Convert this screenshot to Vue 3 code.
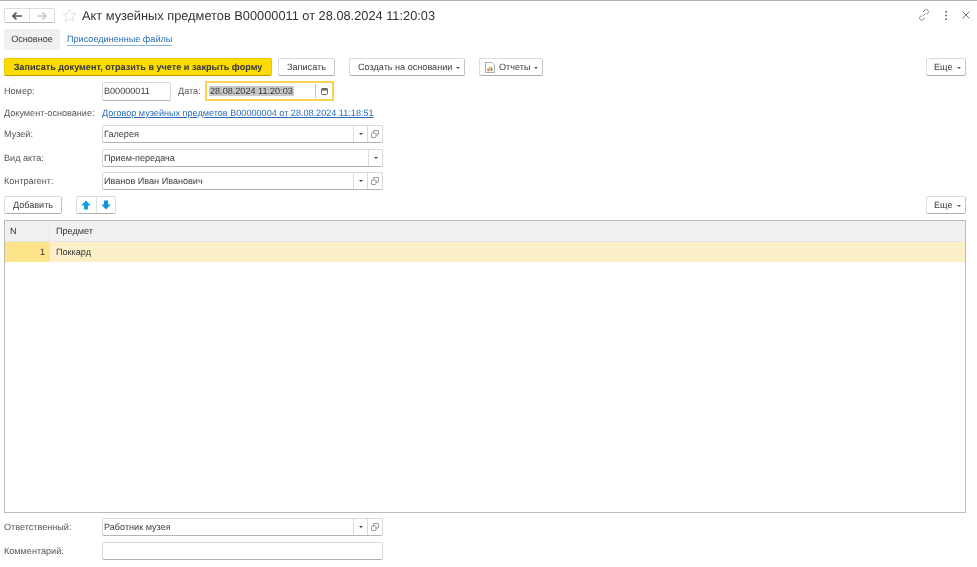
<script setup>
const fields = [
  { label: 'Музей:', value: 'Галерея', open: true },
  { label: 'Вид акта:', value: 'Прием-передача', open: false },
  { label: 'Контрагент:', value: 'Иванов Иван Иванович', open: true }
]
</script>

<template>
  <div class="page">
    <header class="head">
      <div class="nav">
        <button class="nav-btn"><svg width="10" height="8" viewBox="0 0 10 8"><path d="M4.500.5 1 4l3.500 3.500M1.500 4H10" fill="none" stroke="#555" stroke-width="1.700"/></svg></button>
        <button class="nav-btn"><svg width="10" height="8" viewBox="0 0 10 8"><path d="M5.500.5 9 4 5.500 7.500M8.500 4H0" fill="none" stroke="#ccc" stroke-width="1.700"/></svg></button>
      </div>
      <svg class="star" width="15" height="15" viewBox="0 0 15 15"><path d="M7.500 1l1.900 4.400 4.600.4-3.500 3.100 1.100 4.700-4.100-2.500-4.100 2.500 1.100-4.700L1 5.800l4.600-.4z" fill="#fff" stroke="#e2e2e2"/></svg>
      <h1 class="title">Акт музейных предметов В00000011 от 28.08.2024 11:20:03</h1>
      <div class="win-icons">
        <svg width="12" height="12" viewBox="0 0 12 12" fill="none" stroke="#8a8a8a" stroke-width="1"><path d="M5 3l1.800-1.800a2.100 2.100 0 0 1 3 0v0a2.100 2.100 0 0 1 0 3L8.500 5.700M7 9l-1.800 1.500a2.100 2.100 0 0 1-3 0v0a2.100 2.100 0 0 1 0-3L3.500 6.300M4.500 7.500l3-3"/></svg>
        <svg width="2" height="9" viewBox="0 0 2 9" fill="#777"><rect width="2" height="1.600"/><rect y="3.700" width="2" height="1.600"/><rect y="7.400" width="2" height="1.600"/></svg>
        <svg width="8" height="8" viewBox="0 0 8 8" stroke="#777" stroke-width="1"><path d="M.5.5l7 7M7.500.5l-7 7"/></svg>
      </div>
    </header>

    <nav class="tabs">
      <span class="tab">Основное</span>
      <a class="tab-link">Присоединенные файлы</a>
    </nav>

    <div class="toolbar">
      <button class="btn primary">Записать документ, отразить в учете и закрыть форму</button>
      <button class="btn save">Записать</button>
      <button class="btn create">Создать на основании<i class="caret"></i></button>
      <button class="btn reports">
        <svg class="rep-icon" width="10" height="11" viewBox="0 0 10 11"><path d="M.5.500h6.500L9.500 3v7.500H.5z" fill="#fff" stroke="#aaa"/><rect x="2.500" y="6.500" width="1.200" height="2.500" fill="#c33"/><rect x="4.300" y="4.500" width="1.200" height="4.500" fill="#d9a520"/><rect x="6.100" y="5.500" width="1.200" height="3.500" fill="#3a9a3a"/></svg>
        <span>Отчеты</span><i class="caret"></i>
      </button>
      <button class="btn more">Еще<i class="caret"></i></button>
    </div>

    <div class="row number-row">
      <label class="lbl">Номер:</label>
      <div class="input num">В00000011</div>
      <label class="date-lbl">Дата:</label>
      <div class="date">
        <span class="date-text"><span class="sel">28.08.2024 11:20:03</span></span>
        <span class="date-btn"><svg width="7" height="7" viewBox="0 0 7 7"><rect x=".5" y=".5" width="6" height="6" rx="1" fill="#fff" stroke="#666"/><rect x=".5" y=".5" width="6" height="2" fill="#666"/></svg></span>
      </div>
    </div>

    <div class="row base-row">
      <label class="lbl">Документ-основание:</label>
      <a class="link">Договор музейных предметов В00000004 от 28.08.2024 11:18:51</a>
    </div>

    <div v-for="f in fields" :key="f.label" class="row field-row">
      <label class="lbl">{{ f.label }}</label>
      <div class="input wide">
        <span class="val">{{ f.value }}</span>
        <span class="cell"><i class="caret dark"></i></span>
        <span v-if="f.open" class="cell"><svg width="8" height="8" viewBox="0 0 8 8" fill="#fff" stroke="#999"><rect x="2.500" y=".5" width="5" height="4.500" rx=".5"/><rect x=".5" y="3" width="4.500" height="4.500" rx=".5"/></svg></span>
      </div>
    </div>

    <div class="table-bar">
      <button class="btn add">Добавить</button>
      <div class="arrows">
        <button class="arrow"><svg width="10" height="10" viewBox="0 0 10 10"><path d="M5 .5 9.800 5.500H7V9.500H3V5.500H.2z" fill="#12a0dc"/></svg></button>
        <button class="arrow"><svg width="10" height="10" viewBox="0 0 10 10"><path d="M5 9.500.2 4.500H3V.5H7V4.500H9.800z" fill="#1290d8"/></svg></button>
      </div>
      <button class="btn more">Еще<i class="caret"></i></button>
    </div>

    <div class="table">
      <div class="thead">
        <span class="c-n">N</span>
        <span class="c-item">Предмет</span>
      </div>
      <div class="trow">
        <span class="c-n num-cell">1</span>
        <span class="c-item">Поккард</span>
      </div>
    </div>

    <div class="row footer-row">
      <label class="lbl">Ответственный:</label>
      <div class="input wide">
        <span class="val">Работник музея</span>
        <span class="cell"><i class="caret dark"></i></span>
        <span class="cell"><svg width="8" height="8" viewBox="0 0 8 8" fill="#fff" stroke="#999"><rect x="2.500" y=".5" width="5" height="4.500" rx=".5"/><rect x=".5" y="3" width="4.500" height="4.500" rx=".5"/></svg></span>
      </div>
    </div>
    <div class="row comment-row">
      <label class="lbl">Комментарий:</label>
      <div class="input wide"></div>
    </div>
  </div>
</template>

<style>
html, body { margin: 0; background: #fff; overflow: hidden; }
</style>

<style scoped>
.page {
  width: 977px; height: 567px; box-sizing: border-box; background: #fff;
  border-top: 1px solid #b4b4b4; padding: 0 11px 0 4px;
  font-family: "Liberation Sans", Arial, sans-serif; font-size: 9.100px; color: #3c3c3c;
  text-rendering: geometricPrecision;
  filter: blur(0.3px);
}
button { font: inherit; color: inherit; padding: 0; cursor: default; text-rendering: inherit; }
.head { display: flex; align-items: center; height: 27px; padding-top: 1px; box-sizing: border-box; }
.nav { display: flex; width: 51px; height: 15px; border: 1px solid #dcdcdc; border-bottom-color: #b8b8b8; border-radius: 2px; box-sizing: border-box; margin-top: 1px; }
.nav-btn { flex: 1; border: 0; background: #fff; display: flex; align-items: center; justify-content: center; }
.nav-btn + .nav-btn { border-left: 1px solid #e2e2e2; }
.star { margin-left: 7px; }
.title { margin: 0 0 0 5px; font-size: 12.800px; font-weight: 400; color: #333; white-space: nowrap; }
.win-icons { margin-left: auto; margin-right: -4px; display: flex; align-items: center; gap: 15px; }
.tabs { display: flex; align-items: center; height: 21px; margin-top: 1px; }
.tab { width: 56px; height: 21px; line-height: 21px; text-align: center; background: #f1f1f1; border-radius: 2px; color: #333; }
.tab-link { margin-left: 7px; color: #2a6cb8; border-bottom: 1px solid #8fb4d8; line-height: 11px; margin-top: 1px; }
.toolbar { display: flex; align-items: center; margin-top: 8px; height: 18px; }
.btn { height: 18px; box-sizing: border-box; border: 1px solid #dcdcdc; border-bottom-color: #adadad; border-right-color: #c4c4c4; border-radius: 2px; background: #fff; display: inline-flex; align-items: center; justify-content: center; white-space: nowrap; color: #3c3c3c; }
.primary { width: 268px; background: #fcdc00; border-color: #e8c800; border-bottom-color: #b59b00; font-weight: 700; color: #333; }
.save { width: 57px; margin-left: 6px; }
.create { width: 116px; margin-left: 14px; justify-content: flex-start; padding-left: 8px; }
.reports { width: 64px; margin-left: 14px; justify-content: flex-start; padding-left: 5px; }
.rep-icon { margin-right: 4px; }
.more { width: 40px; margin-left: auto; justify-content: flex-start; padding-left: 7px; }
.caret { display: inline-block; width: 0; height: 0; border: 2px solid transparent; border-top: 2.500px solid #555; border-bottom: 0; margin-left: 4px; margin-top: 1px; }
.caret.dark { margin: 0; border-top-color: #444; }
.row { display: flex; align-items: center; }
.lbl { width: 98px; flex: none; color: #555; }
.number-row { margin-top: 5px; height: 20px; }
.input { box-sizing: border-box; height: 18px; border: 1px solid #d8d8d8; border-bottom-color: #b4b4b4; border-radius: 2px; display: flex; align-items: center; background: #fff; color: #3c3c3c; }
.num { width: 69px; padding-left: 1px; height: 19px; }
.date-lbl { margin-left: 7px; width: 27px; color: #555; }
.date { width: 129px; height: 20px; box-sizing: border-box; border: 2px solid #fbd44e; display: flex; align-items: center; }
.date-text { flex: 1; padding-left: 2px; }
.sel { background: #c8c8c8; color: #333; padding: 0 1px; }
.date-btn { width: 16px; height: 14px; border-left: 1px solid #c4c4c4; display: flex; align-items: center; justify-content: center; }
.base-row { margin-top: 6px; height: 12px; }
.link { color: #2a6cb8; text-decoration: underline; text-underline-offset: 1px; }
.field-row { height: 18px; margin-top: 5.500px; }
.base-row + .field-row { margin-top: 6px; }
.wide { width: 281px; }
.val { flex: 1; padding-left: 1px; }
.cell { width: 14px; height: 100%; border-left: 1px solid #d8d8d8; display: flex; align-items: center; justify-content: center; box-sizing: border-box; }
.cell + .cell { width: 15px; }
.table-bar { display: flex; align-items: center; height: 18px; margin-top: 6px; }
.add { width: 58px; }
.arrows { display: flex; margin-left: 14px; width: 40px; height: 18px; box-sizing: border-box; border: 1px solid #dcdcdc; border-bottom-color: #adadad; border-radius: 2px; }
.arrow { flex: 1; border: 0; background: #fff; display: flex; align-items: center; justify-content: center; }
.arrow + .arrow { border-left: 1px solid #e0e0e0; }
.table { margin-top: 6px; height: 293px; box-sizing: border-box; border: 1px solid #bcbcbc; }
.thead { display: flex; height: 21px; background: #f1f1f1; border-bottom: 1px solid #e6e6e6; box-sizing: border-box; color: #333; }
.trow { display: flex; height: 20px; background: #fdf0c8; color: #333; }
.c-n { width: 45px; padding: 0 5px; box-sizing: border-box; display: flex; align-items: center; border-right: 1px solid #e4e4e4; }
.c-item { padding-left: 6px; display: flex; align-items: center; }
.num-cell { justify-content: flex-end; background: #fde38a; border-right: 0; }
.footer-row { margin-top: 5px; height: 18px; }
.comment-row { margin-top: 6px; height: 18px; }
</style>
